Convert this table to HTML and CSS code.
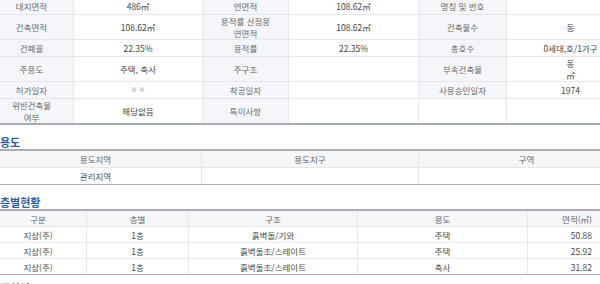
FILE: index.html
```html
<!DOCTYPE html>
<html lang="ko">
<head>
<meta charset="utf-8">
<link rel="stylesheet" href="styles.css">
</head>
<body>
<div class="page">
  <table class="grid info">
    <colgroup><col style="width:84px"><col style="width:129px"><col style="width:86px"><col style="width:130px"><col style="width:88px"><col style="width:128px"></colgroup>
    <tr><th>대지면적</th><td>486㎡</td><th>연면적</th><td>108.62㎡</td><th>명칭 및 번호</th><td></td></tr>
    <tr><th>건축면적</th><td>108.62㎡</td><th>용적률 산정용<br>연면적</th><td>108.62㎡</td><th>건축물수</th><td>동</td></tr>
    <tr><th>건폐율</th><td>22.35%</td><th>용적률</th><td>22.35%</td><th>총호수</th><td>0세대,호/1가구</td></tr>
    <tr><th>주용도</th><td>주택, 축사</td><th>주구조</th><td></td><th>부속건축물</th><td>동<br>㎡</td></tr>
    <tr><th>허가일자</th><td class="dim">※ ※</td><th>착공일자</th><td></td><th>사용승인일자</th><td>1974</td></tr>
    <tr><th>위반건축물<br>여부</th><td>해당없음</td><th>특이사항</th><td></td><td class="blank"></td><td class="blank"></td></tr>
  </table>

  <h2 class="title">용도</h2>
  <table class="grid list">
    <colgroup><col style="width:212px"><col style="width:217px"><col style="width:216px"></colgroup>
    <tr class="head"><th>용도지역</th><th>용도지구</th><th>구역</th></tr>
    <tr><td>관리지역</td><td></td><td></td></tr>
  </table>

  <h2 class="title">층별현황</h2>
  <table class="grid list floors">
    <colgroup><col style="width:97px"><col style="width:102px"><col style="width:169px"><col style="width:170px"><col style="width:107px"></colgroup>
    <tr class="head"><th>구분</th><th>층별</th><th>구조</th><th>용도</th><th class="num">면적(㎡)</th></tr>
    <tr><td>지상(주)</td><td>1층</td><td>흙벽돌/기와</td><td>주택</td><td class="num">50.88</td></tr>
    <tr><td>지상(주)</td><td>1층</td><td>흙벽돌조/스레이트</td><td>주택</td><td class="num">25.92</td></tr>
    <tr><td>지상(주)</td><td>1층</td><td>흙벽돌조/스레이트</td><td>축사</td><td class="num">31.82</td></tr>
  </table>

  <h2 class="title next">주차장</h2>
</div>
</body>
</html>
```

FILE: styles.css
```css
html, body {
  margin: 0;
  padding: 0;
  background: #ffffff;
}
body {
  width: 600px;
  height: 284px;
  overflow: hidden;
  font-family: "Noto Sans CJK KR", "Noto Sans", sans-serif;
  font-size: 8.5px;
  color: #4a4a4a;
}
.page {
  width: 645px;
  margin: -2px 0 0 -11px;
}
.grid {
  width: 645px;
  table-layout: fixed;
  border-collapse: collapse;
}
.grid th, .grid td {
  height: 16px;
  padding: 0 4px;
  line-height: 12px;
  text-align: center;
  vertical-align: middle;
  font-weight: normal;
  border-bottom: 1px solid #e6e8ec;
  border-left: 1px solid #e6e8ec;
  border-right: 1px solid #e6e8ec;
}
.info th {
  background: #f4f6f9;
  color: #6a6a6a;
}
.info td {
  color: #444;
}
.info tr:last-child th, .info tr:last-child td {
  border-bottom: 2px solid #a9adb5;
}
.info td.dim {
  color: #b4b4b4;
  font-family: "DejaVu Sans", sans-serif;
  font-variant-emoji: text;
  font-size: 7px;
}
.title {
  margin: 0;
  padding: 10px 0 0 11px;
  height: 14px;
  line-height: 14px;
  font-size: 11px;
  font-weight: 700;
  color: #2f5ea8;
}
.list {
  border-top: 2px solid #a9adb5;
}
.list tr.head th {
  background: #f5f6f8;
  color: #666;
}
.list tr:last-child td {
  border-bottom: 1px solid #a9adb5;
}
.floors td, .floors th {
  height: 15px;
}
.floors .num {
  text-align: right;
  padding-right: 42px;
}
.next {
  padding-top: 6px;
}
```
